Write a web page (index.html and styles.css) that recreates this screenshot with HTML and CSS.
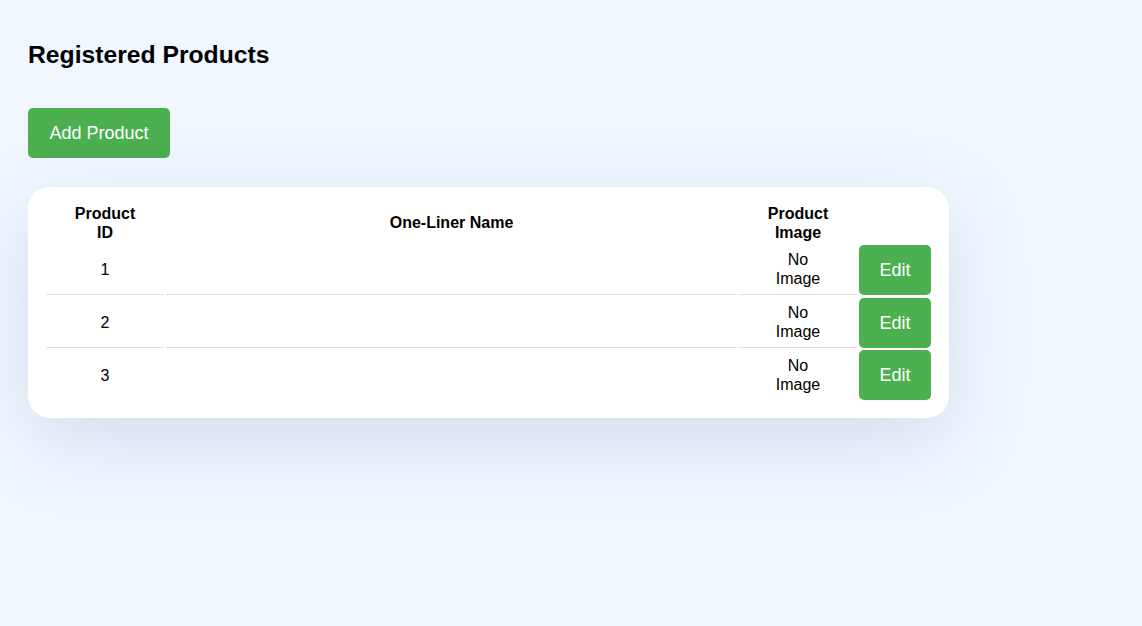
FILE: index.html
```html
<!DOCTYPE html>
<html>
<head>
<meta charset="utf-8">
<title>Registered Products</title>
<link rel="stylesheet" href="styles.css">
</head>
<body>
<div class="page">
  <h2 class="title">Registered Products</h2>
  <button class="btn btn-add">Add Product</button>
  <div class="card">
    <table class="products">
      <thead>
        <tr>
          <th class="col-id">Product ID</th>
          <th class="col-name">One-Liner Name</th>
          <th class="col-img">Product Image</th>
          <th class="col-act"></th>
        </tr>
      </thead>
      <tbody>
        <tr>
          <td>1</td>
          <td></td>
          <td>No Image</td>
          <td class="act"><button class="btn btn-edit">Edit</button></td>
        </tr>
        <tr>
          <td>2</td>
          <td></td>
          <td>No Image</td>
          <td class="act"><button class="btn btn-edit">Edit</button></td>
        </tr>
        <tr>
          <td>3</td>
          <td></td>
          <td>No Image</td>
          <td class="act"><button class="btn btn-edit">Edit</button></td>
        </tr>
      </tbody>
    </table>
  </div>
</div>
</body>
</html>
```

FILE: styles.css
```css
html {
  min-height: 100%;
  background: #f0f7ff;
}
body {
  margin: 0;
  padding: 0;
  min-height: 626px;
  background: #f0f7ff;
  font-family: "Liberation Sans", Arial, sans-serif;
  color: #000;
}
.page {
  padding: 28px;
}
.title {
  margin: 13px 0 39px;
  font-size: 24.7px;
  font-weight: bold;
  line-height: 28px;
}
.btn {
  display: block;
  background: #4caf50;
  color: #fff;
  border: none;
  border-radius: 5px;
  font-family: "Liberation Sans", Arial, sans-serif;
  font-size: 18px;
  line-height: 20px;
  padding: 15px 21.5px;
  cursor: pointer;
}
.card {
  margin-top: 29px;
  width: 921px;
  box-sizing: border-box;
  background: #fff;
  border-radius: 22px;
  padding: 16px;
  box-shadow: 0 22px 80px rgba(60, 90, 150, 0.17);
}
.products {
  width: 100%;
  table-layout: fixed;
  border-collapse: separate;
  border-spacing: 2px;
  font-size: 16px;
  line-height: 19px;
}
.products th {
  font-weight: bold;
  padding: 0 26px;
  text-align: center;
  vertical-align: middle;
  line-height: 18.5px;
  height: 37px;
}
.products td {
  padding: 0 26px;
  text-align: center;
  vertical-align: middle;
  border-bottom: 1px solid #dddddd;
  height: 50px;
}
.products tr:last-child td {
  border-bottom: none;
}
.products td.act {
  border-bottom: none;
  padding: 0;
}
.col-id { width: 66px; }
.col-img { width: 66px; }
.col-act { width: 72px; padding: 0 !important; }
.btn-edit {
  width: 72px;
  padding: 15px 0;
}
```
